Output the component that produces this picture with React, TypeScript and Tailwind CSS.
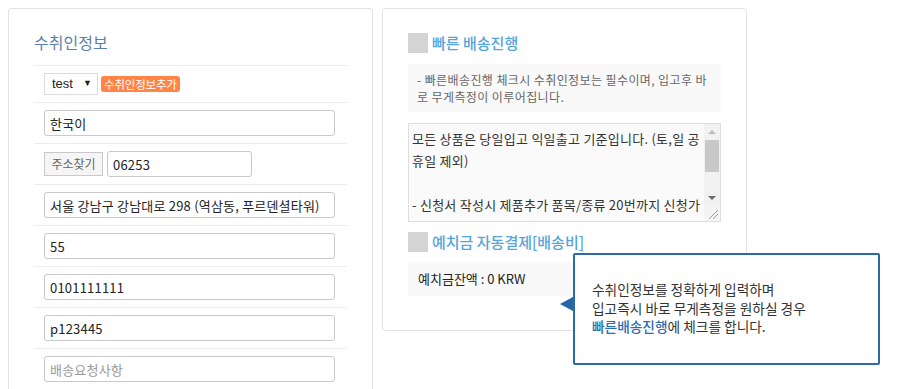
const font = { fontFamily: '"Noto Sans CJK KR", "Noto Sans", sans-serif' };

function Row({ children }: { children: React.ReactNode }) {
  return <div className="flex items-center gap-[4px] border-b border-[#ececec] py-[7px] pl-[10px]">{children}</div>;
}

function Field({ value, placeholder, w = "w-[291px]" }: { value?: string; placeholder?: string; w?: string }) {
  return (
    <input
      readOnly
      value={value ?? ""}
      placeholder={placeholder}
      className={`${w} h-[26px] rounded-[3px] border border-[#c9c9c9] bg-white px-[5px] text-[13px] tracking-[0.2px] text-[#222] placeholder:text-[#999] outline-none`}
    />
  );
}

function Heading({ children }: { children: React.ReactNode }) {
  return (
    <div className="flex items-center gap-[4px]">
      <span className="h-[20px] w-[20px] bg-[#d4d4d4]" />
      <span className="text-[15px] font-medium leading-[20px] text-[#55a5dc]">{children}</span>
    </div>
  );
}

// 스크롤바 (고전 스타일)
function ScrollBar() {
  return (
    <div className="flex w-[16px] flex-col bg-[#f1f1f1]">
      <div className="flex h-[16px] items-center justify-center">
        <span className="h-0 w-0 border-x-[4px] border-b-[4px] border-x-transparent border-b-[#bdbdbd]" />
      </div>
      <div className="mx-[1px] h-[32px] bg-[#c8c8c8]" />
      <div className="flex-1" />
      <div className="flex h-[16px] items-center justify-center">
        <span className="h-0 w-0 border-x-[4px] border-t-[4px] border-x-transparent border-t-[#6b6b6b]" />
      </div>
      <div className="relative h-[15px] bg-[#f4f4f4]">
        <svg width="16" height="15" viewBox="0 0 16 15" className="absolute inset-0">
          <path d="M5 13 L14 4 M9 13 L14 8" stroke="#9a9a9a" strokeWidth="1" />
        </svg>
      </div>
    </div>
  );
}

export default function App() {
  return (
    <div style={font} className="relative h-[389px] w-[900px] overflow-hidden bg-white">
      <div className="flex items-start gap-[9px] pl-[8px] pt-[8px]">
        {/* 수취인정보 */}
        <div className="w-[365px] rounded-t-[4px] border border-b-0 border-[#e2e2e2] px-[25px] pt-[23px]">
          <div className="border-b border-[#ececec] pb-[13px] text-[16px] leading-[20px] text-[#5a7fab]">수취인정보</div>
          <div className="flex items-center gap-[3px] border-b border-[#ececec] py-[7px] pl-[10px]">
            <div className="flex h-[22px] w-[54px] items-center justify-between border border-[#dcdcdc] bg-white pl-[7px] pr-[5px] text-[13px] text-[#222]" style={{ fontFamily: '"Liberation Sans", sans-serif' }}>
              <span>test</span>
              <span className="text-[9px]">▼</span>
            </div>
            <span className="rounded-[3px] bg-[#ff8446] px-[3px] text-[11.5px] leading-[16px] tracking-[-0.2px] text-white">수취인정보추가</span>
          </div>
          <Row><Field value="한국이" /></Row>
          <Row>
            <button className="h-[24px] w-[59px] border border-[#c9c9c9] bg-[#f5f5f5] text-[12px] text-[#666]">주소찾기</button>
            <Field value="06253" w="w-[145px]" />
          </Row>
          <Row><Field value="서울 강남구 강남대로 298 (역삼동, 푸르덴셜타워)" /></Row>
          <Row><Field value="55" /></Row>
          <Row><Field value="0101111111" /></Row>
          <Row><Field value="p123445" /></Row>
          <Row><Field placeholder="배송요청사항" /></Row>
        </div>

        {/* 빠른 배송진행 */}
        <div className="w-[365px] rounded-[4px] border border-[#e2e2e2] px-[25px] pb-[34px] pt-[24px]">
          <Heading>빠른 배송진행</Heading>
          <div className="mt-[11px] break-all bg-[#f9f9f9] px-[9px] py-[7px] text-[12px] leading-[17px] tracking-[0.4px] text-[#666]">
            - 빠른배송진행 체크시 수취인정보는 필수이며, 입고후 바로 무게측정이 이루어집니다.
          </div>
          <div className="mt-[11px] flex h-[99px] overflow-hidden border border-[#dedede] bg-[#fafafa]">
            <div className="h-[97px] flex-1 overflow-hidden break-all pl-[3px] pr-[1px] pt-[4px] text-[13px] leading-[22px] tracking-[0.25px] text-[#333]">
              <p>모든 상품은 당일입고 익일출고 기준입니다. (토,일 공휴일 제외)</p>
              <p className="h-[22px]" />
              <p className="h-[22px] overflow-hidden">- 신청서 작성시 제품추가 품목/종류 20번까지 신청가능합니다.</p>
            </div>
            <ScrollBar />
          </div>
          <div className="mt-[10px]">
            <Heading>예치금 자동결제[배송비]</Heading>
          </div>
          <div className="mt-[10px] h-[34px] bg-[#f9f9f9] pl-[10px] text-[13px] leading-[34px] text-[#222]">
            예치금잔액 : 0 KRW
          </div>
        </div>
      </div>

      {/* tooltip */}
      <div className="absolute left-[573px] top-[253px] flex h-[112px] w-[307px] items-center rounded-[2px] border-2 border-[#2b69a8] bg-white pb-[2px] pl-[17px] text-[13.7px] leading-[18.5px] text-[#333]">
        <div>
          수취인정보를 정확하게 입력하며
          <br />
          입고즉시 바로 무게측정을 원하실 경우
          <br />
          <span className="font-medium text-[#2a6cb0]">빠른배송진행</span>에 체크를 합니다.
        </div>
        <span className="absolute left-[-15px] top-[42px] h-0 w-0 border-y-[7px] border-r-[13px] border-y-transparent border-r-[#2566a3]" />
      </div>
    </div>
  );
}
